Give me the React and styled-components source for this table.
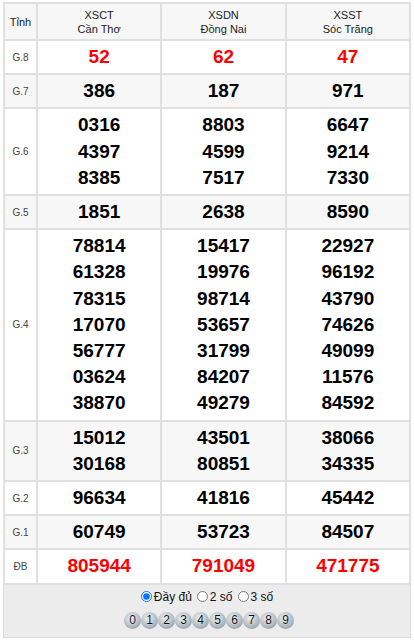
import React from "react";
import styled, { createGlobalStyle } from "styled-components";

const Global = createGlobalStyle`
  html, body { margin: 0; padding: 0; background: #fff; }
  body { font-family: "Liberation Sans", Arial, sans-serif; color: #333; }
`;

const Wrap = styled.div`
  padding: 2px 3px 0 3px;
  width: 408px;
`;

const Grid = styled.div`
  display: grid;
  grid-template-columns: 31px 1fr 1fr 1fr;
  gap: 2px;
  background: #e0e0e0;
  border: 2px solid #e0e0e0;
  border-bottom: none;
`;

const Cell = styled.div`
  background: ${(p) => (p.$alt ? "#f7f7f7" : "#fff")};
  display: flex;
  flex-direction: column;
  align-items: center;
  justify-content: center;
  text-align: center;
`;

const HeadCell = styled(Cell)`
  background: #f7f7f7;
  height: 35px;
  font-size: 11px;
  line-height: 14px;
  color: #222;
`;

const Label = styled(Cell)`
  font-size: 10px;
  color: #444;
`;

const NumCell = styled(Cell)`
  padding: 3px 0;
`;

const Num = styled.div`
  font-family: "Liberation Sans", Arial, sans-serif;
  font-weight: bold;
  font-size: 19px;
  line-height: 26.2px;
  color: ${(p) => (p.$red ? "#ff0000" : "#000")};
`;

const Footer = styled.div`
  background: #ececec;
  border: 1px solid #dcdcdc;
  border-top: 2px solid #e0e0e0;
  height: 55px;
  display: flex;
  flex-direction: column;
  align-items: center;
  padding-top: 4px;
  box-sizing: border-box;
`;

const Radios = styled.div`
  display: flex;
  align-items: center;
  font-size: 12px;
  color: #111;
  height: 16px;
`;

const RadioLabel = styled.label`
  display: flex;
  align-items: center;
  margin-right: 5px;
  &:last-child { margin-right: 0; }
`;

const Radio = styled.input`
  margin: 0 2px 0 0;
  width: 11px;
  height: 11px;
`;

const Balls = styled.div`
  display: flex;
  margin-top: 7px;
  padding-left: 4px;
`;

const Ball = styled.span`
  width: 17px;
  height: 17px;
  border-radius: 50%;
  background: radial-gradient(circle at 42% 35%, #eef1f3 0%, #c2cbd1 40%, #7f8d97 100%);
  display: flex;
  align-items: center;
  justify-content: center;
  font-size: 12px;
  color: #111;
  text-shadow: 0 0 1px #fff;
`;

const provinces = [
  ["XSCT", "Cần Thơ"],
  ["XSDN", "Đồng Nai"],
  ["XSST", "Sóc Trăng"],
];

const rows = [
  ["G.8", [["52"], ["62"], ["47"]], true],
  ["G.7", [["386"], ["187"], ["971"]]],
  ["G.6", [["0316", "4397", "8385"], ["8803", "4599", "7517"], ["6647", "9214", "7330"]]],
  ["G.5", [["1851"], ["2638"], ["8590"]]],
  ["G.4", [
    ["78814", "61328", "78315", "17070", "56777", "03624", "38870"],
    ["15417", "19976", "98714", "53657", "31799", "84207", "49279"],
    ["22927", "96192", "43790", "74626", "49099", "11576", "84592"],
  ]],
  ["G.3", [["15012", "30168"], ["43501", "80851"], ["38066", "34335"]]],
  ["G.2", [["96634"], ["41816"], ["45442"]]],
  ["G.1", [["60749"], ["53723"], ["84507"]]],
  ["ĐB", [["805944"], ["791049"], ["471775"]], true],
];

export default function App() {
  return (
    <Wrap>
      <Global />
      <Grid>
        <HeadCell>Tỉnh</HeadCell>
        {provinces.map(([c, n]) => (
          <HeadCell key={c}>
            <div>{c}</div>
            <div>{n}</div>
          </HeadCell>
        ))}
        {rows.map(([label, cols, red], i) => {
          const alt = i % 2 === 1;
          return (
            <React.Fragment key={label}>
              <Label $alt={alt}>{label}</Label>
              {cols.map((nums, j) => (
                <NumCell key={j} $alt={alt}>
                  {nums.map((n) => (
                    <Num key={n} $red={red}>{n}</Num>
                  ))}
                </NumCell>
              ))}
            </React.Fragment>
          );
        })}
      </Grid>
      <Footer>
        <Radios>
          <RadioLabel><Radio type="radio" name="m" defaultChecked />Đầy đủ</RadioLabel>
          <RadioLabel><Radio type="radio" name="m" />2 số</RadioLabel>
          <RadioLabel><Radio type="radio" name="m" />3 số</RadioLabel>
        </Radios>
        <Balls>
          {[0,1,2,3,4,5,6,7,8,9].map((d) => <Ball key={d}>{d}</Ball>)}
        </Balls>
      </Footer>
    </Wrap>
  );
}
